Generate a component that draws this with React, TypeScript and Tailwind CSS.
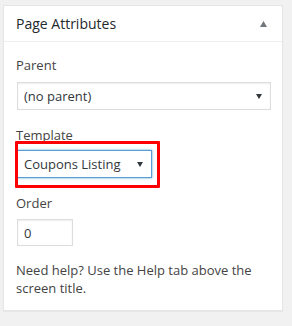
import React from "react";

function Arrow() {
  return (
    <svg width="6" height="5" viewBox="0 0 6 5">
      <path d="M0 0 H6 L3 5 Z" fill="#32373c" />
    </svg>
  );
}

export default function App() {
  return (
    <div
      className="w-[292px] h-[326px] bg-[#f1f1f1] pt-[5px] pl-[3px]"
      style={{ fontFamily: '"Open Sans", "Noto Sans", sans-serif' }}
    >
      <div className="w-[280px] h-[306px] bg-white border border-[#e5e5e5] shadow-[0_1px_1px_rgba(0,0,0,0.04)]">
        <div className="h-[36px] border-b border-[#eee] flex items-center justify-between pl-[12px] pr-[15px]">
          <h2 className="text-[14px] leading-[20px] text-[#23282d]">Page Attributes</h2>
          <svg width="7" height="6" viewBox="0 0 7 6">
            <path d="M3.5 0 L7 6 H0 Z" fill="#72777c" />
          </svg>
        </div>
        <div className="px-[12px] pt-[14px] text-[13px] text-[#444]">
          <div className="leading-[18px] h-[18px]">Parent</div>
          <div className="mt-[8px] ml-[1px] h-[28px] w-[254px] border border-[#ddd] flex items-center justify-between pl-[6px] pr-[8px] text-[#32373c] shadow-[inset_0_1px_2px_rgba(0,0,0,0.07)]">
            <span className="leading-[18px]">(no parent)</span>
            <Arrow />
          </div>
          <div className="mt-[16px] leading-[18px] h-[18px]">Template</div>
          <div className="relative mt-[6px] ml-[1px] w-[135px]">
            <div className="h-[28px] w-[135px] border border-[#5b9dd9] flex items-center justify-between pl-[6px] pr-[8px] text-[#32373c] shadow-[0_0_2px_rgba(30,140,190,0.8)]">
              <span className="leading-[18px]">Coupons Listing</span>
              <Arrow />
            </div>
            <div className="absolute left-[-2px] top-[-9px] w-[145px] h-[47px] border-[3px] border-[#ff0000] rounded-[1px] pointer-events-none" />
          </div>
          <div className="mt-[16px] leading-[18px] h-[18px]">Order</div>
          <div className="mt-[7px] ml-[1px] h-[27px] w-[56px] border border-[#ddd] flex items-center pl-[6px] text-[#32373c] shadow-[inset_0_1px_2px_rgba(0,0,0,0.07)]">
            <span className="leading-[18px]">0</span>
          </div>
          <p className="mt-[15px] leading-[18px] text-[#444]">
            Need help? Use the Help tab above the screen title.
          </p>
        </div>
      </div>
    </div>
  );
}
